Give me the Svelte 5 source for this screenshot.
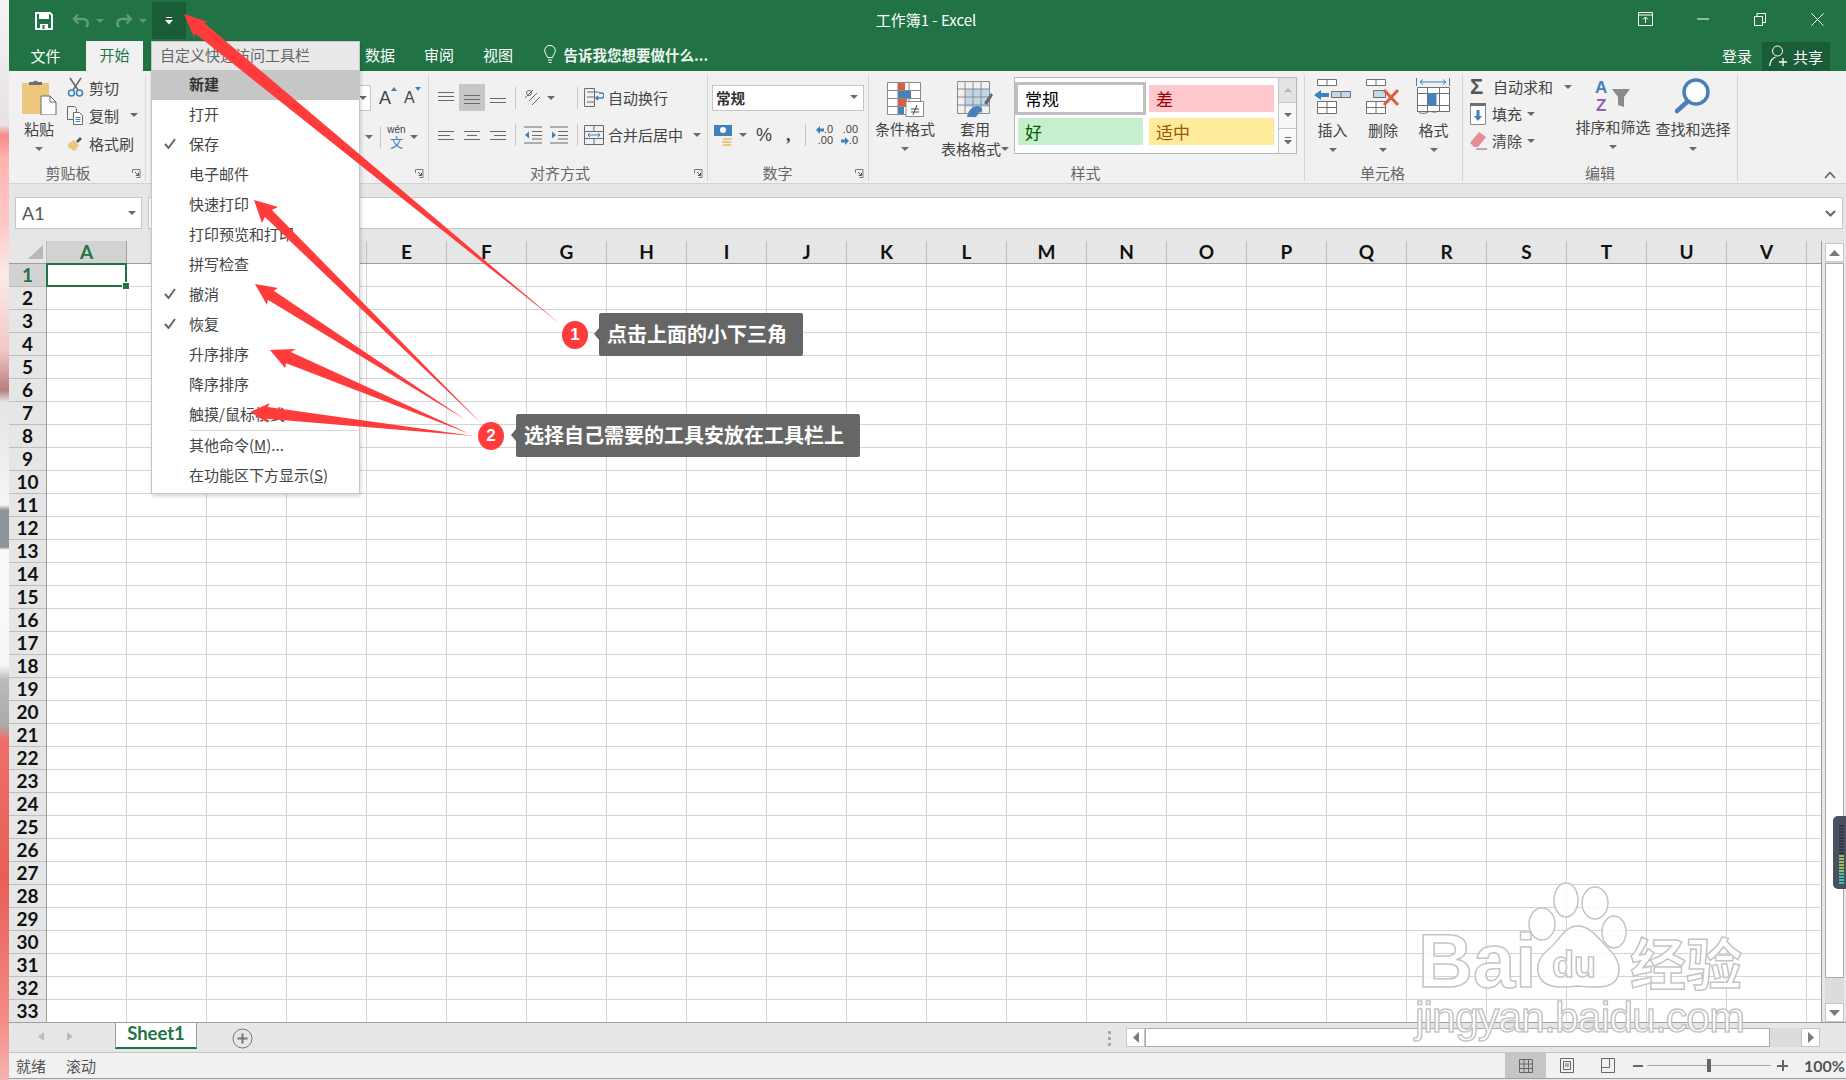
<script>
	const columns = "ABCDEFGHIJKLMNOPQRSTUV".split("");
	const rows = Array.from({ length: 33 }, (_, i) => i + 1);

	const menuItems = [
		{ label: "新建", active: true },
		{ label: "打开" },
		{ label: "保存", checked: true },
		{ label: "电子邮件" },
		{ label: "快速打印" },
		{ label: "打印预览和打印" },
		{ label: "拼写检查" },
		{ label: "撤消", checked: true },
		{ label: "恢复", checked: true },
		{ label: "升序排序" },
		{ label: "降序排序" },
		{ label: "触摸/鼠标模式" }
	];

	const arrows = [
		{ tip: [184, 14], a: [208, 22], b: [194, 37], tail: [560, 324], hw: 7 },
		{ tip: [254, 200], a: [278, 207], b: [262, 223], tail: [482, 424], hw: 5 },
		{ tip: [255, 284], a: [278, 288], b: [267, 305], tail: [466, 420], hw: 5.5 },
		{ tip: [270, 350], a: [296, 349], b: [285, 368], tail: [470, 434], hw: 6 },
		{ tip: [250, 412], a: [270, 403], b: [268, 423], tail: [474, 436], hw: 6 }
	];

	// tapered shaft from the tail up to the barbs
	function arrowPoints(r) {
		const mx = (r.a[0] + r.b[0]) / 2;
		const my = (r.a[1] + r.b[1]) / 2;
		const nx = mx + (r.tip[0] - mx) * 0.1;
		const ny = my + (r.tip[1] - my) * 0.1;
		const dx = r.tail[0] - r.tip[0];
		const dy = r.tail[1] - r.tip[1];
		const len = Math.hypot(dx, dy);
		let px = -dy / len;
		let py = dx / len;
		// make the perpendicular point at barb a
		if ((r.a[0] - mx) * px + (r.a[1] - my) * py < 0) {
			px = -px;
			py = -py;
		}
		const pts = [
			r.tail,
			[nx + px * r.hw, ny + py * r.hw],
			r.a,
			r.tip,
			r.b,
			[nx - px * r.hw, ny - py * r.hw]
		];
		return pts.map((p) => p.join(",")).join(" ");
	}
</script>

{#snippet caret(color = "#6a6a6a")}
	<svg class="caret" width="8" height="4" viewBox="0 0 8 4"><path d="M0 0h8L4 4z" fill={color} /></svg>
{/snippet}

{#snippet launcher()}
	<svg class="launcher" width="9" height="9" viewBox="0 0 9 9" fill="none" stroke="#7a7a7a">
		<path d="M.5 4V.5H8v8H4.5" />
		<path d="M3 3l3.5 3.5M6.5 3.8v2.7H3.8" stroke="#5a5a5a" />
	</svg>
{/snippet}

{#snippet aligned(widths, offsets, y = 0)}
	<svg width="18" height="16" viewBox="0 0 18 16" stroke="#6b6b6b">
		{#each widths as w, i}
			<path d={`M${offsets[i]} ${y + i * 4 + 2.5}h${w}`} />
		{/each}
	</svg>
{/snippet}

<div class="screen">
	<div class="desktop"></div>

	<div class="window">
		<header class="titlebar">
			<div class="qat">
				<svg class="save" width="18" height="18" viewBox="0 0 18 18">
					<path d="M1 1h14l2 2v14H1z" fill="none" stroke="#fff" stroke-width="2" />
					<path d="M4 1h10v6H4z" fill="#fff" />
					<path d="M5 12h8v5H5z" fill="#fff" />
					<path d="M7.5 13h2v4h-2z" fill="#217346" />
				</svg>
				<svg class="undo" width="18" height="16" viewBox="0 0 18 16" fill="none" stroke="#6ba283" stroke-width="2.4">
					<path d="M6 1.5L2 6l4.500 4.500M2.500 6H11a4.500 4.500 0 0 1 3 8" />
				</svg>
				<span class="dim-caret">{@render caret("#5f9a79")}</span>
				<svg class="redo" width="18" height="16" viewBox="0 0 18 16" fill="none" stroke="#6ba283" stroke-width="2.4">
					<path d="M12 1.500L16 6l-4.500 4.500M15.500 6H7a4.500 4.500 0 0 0-3 8" />
				</svg>
				<span class="dim-caret">{@render caret("#5f9a79")}</span>
				<div class="qat-more">
					<svg width="8" height="8" viewBox="0 0 8 8"><path d="M1 0h6v1H1zM0 3h8L4 7.500z" fill="#fff" /></svg>
				</div>
			</div>
			<div class="doc-title">工作簿1 - Excel</div>
			<div class="win-controls">
				<span class="win-btn">
					<svg width="15" height="14" viewBox="0 0 15 14" fill="none" stroke="#fff"><path d="M.5.5h14v13H.5zM.5 3h14M7.500 11V5M5 7.500l2.500-2.500L10 7.500" /></svg>
				</span>
				<span class="win-btn"><svg width="12" height="2" viewBox="0 0 12 2"><path d="M0 1h12" stroke="#fff" /></svg></span>
				<span class="win-btn">
					<svg width="12" height="13" viewBox="0 0 12 13" fill="none" stroke="#fff"><path d="M.5 3.500h8v9h-8zM3 3.500V.5h8.500v9H8.500" /></svg>
				</span>
				<span class="win-btn">
					<svg width="13" height="13" viewBox="0 0 13 13" stroke="#fff"><path d="M.5.5l12 12M12.500.5l-12 12" /></svg>
				</span>
			</div>
		</header>

		<nav class="tabs">
			<span class="tab file">文件</span>
			<span class="tab home">开始</span>
			<span class="tab-gap"></span>
			<span class="tab">数据</span>
			<span class="tab">审阅</span>
			<span class="tab">视图</span>
			<div class="tell-me">
				<svg width="12" height="19" viewBox="0 0 12 19" fill="none" stroke="#fff">
					<path d="M3.500 12.500C3 10 .7 8.500.7 5.700a5.300 5.300 0 0 1 10.600 0c0 2.800-2.300 4.300-2.800 6.800z" />
					<path d="M4 15h4M4.500 17.500h3" />
				</svg>
				<span>告诉我您想要做什么...</span>
			</div>
			<div class="account">
				<span class="login">登录</span>
				<div class="share">
					<svg width="19" height="22" viewBox="0 0 19 22" fill="none" stroke="#fff">
						<circle cx="8.500" cy="6" r="5" />
						<path d="M.7 21c.4-4.500 2.800-8 6-9M14 13v8M10 17h8" stroke-width="1.300" />
					</svg>
					<span>共享</span>
				</div>
			</div>
		</nav>

		<section class="ribbon">
			<div class="group clipboard">
				<div class="group-body">
					<div class="big-btn paste">
						<svg width="36" height="36" viewBox="0 0 36 36">
							<rect x="1" y="4" width="27" height="31" rx="1" fill="#eec77f" />
							<path d="M8 6V3h4a3 3 0 0 1 5 0h4v3z" fill="#6f6f6f" />
							<path d="M20 17h9l6 6v13H20z" fill="#fff" stroke="#6a6a6a" />
							<path d="M29 17v6h6" fill="none" stroke="#6a6a6a" />
						</svg>
						<span class="big-label">粘贴</span>
						{@render caret()}
					</div>
					<div class="small-col">
						<div class="small-row">
							<svg width="17" height="20" viewBox="0 0 17 20" fill="none">
								<path d="M3 1l8 12M14 1L6 13" stroke="#6a6a6a" stroke-width="1.600" />
								<circle cx="4.500" cy="16" r="3" stroke="#3f80bd" stroke-width="1.500" />
								<circle cx="12.500" cy="16" r="3" stroke="#3f80bd" stroke-width="1.500" />
							</svg>
							<span>剪切</span>
						</div>
						<div class="small-row">
							<svg width="17" height="19" viewBox="0 0 17 19" fill="#f1f1f1" stroke="#6a6a6a">
								<path d="M.5.5h7l2 2v11h-9z" />
								<path d="M6.500 6.500h6l3 3v9h-9z" fill="#fff" />
								<path d="M8.500 11.500h5M8.500 13.500h5M8.500 15.500h5" stroke="#3f80bd" />
							</svg>
							<span>复制</span>
							<span class="after-text">{@render caret()}</span>
						</div>
						<div class="small-row">
							<svg width="17" height="17" viewBox="0 0 17 17">
								<path d="M1 9l6-4 5 5-4 6-3-1-1-2-2 1z" fill="#eec77f" />
								<path d="M9 6l4-4 2 2-4 4z" fill="#5a5a5a" />
							</svg>
							<span>格式刷</span>
						</div>
					</div>
				</div>
				<div class="group-label">剪贴板{@render launcher()}</div>
			</div>

			<div class="group font">
				<div class="group-body stacked">
					<div class="tool-row">
						<div class="font-size-stub">{@render caret()}</div>
						<span class="grow-a">A<svg width="6" height="4" viewBox="0 0 6 4"><path d="M0 4l3-4 3 4z" fill="#3f80bd" /></svg></span>
						<span class="grow-a shrink">A<svg width="6" height="4" viewBox="0 0 6 4"><path d="M0 0l3 4 3-4z" fill="#3f80bd" /></svg></span>
					</div>
					<div class="tool-row lower">
						{@render caret()}
						<i class="vsep"></i>
						<span class="wen"><b>wén</b><em>文</em></span>
						{@render caret()}
					</div>
				</div>
				<div class="group-label">{@render launcher()}</div>
			</div>

			<div class="group align">
				<div class="group-body stacked">
					<div class="tool-row top-row">
						<span class="al-btn">{@render aligned([16, 16, 16], [1, 1, 1], 0)}</span>
						<span class="al-btn on">{@render aligned([16, 16, 16], [1, 1, 1], 3)}</span>
						<span class="al-btn">{@render aligned([16, 16, 16], [1, 1, 1], 6)}</span>
						<i class="vsep"></i>
						<span class="orient">
							<svg width="19" height="19" viewBox="0 0 19 19" fill="none" stroke="#6a6a6a">
								<path d="M2 10l8-8M6 13l8-8M9 17l8-8" />
								<circle cx="6" cy="5" r="2.500" />
							</svg>
							{@render caret()}
						</span>
						<i class="vsep"></i>
						<span class="wrap-cmd">
							<svg width="20" height="19" viewBox="0 0 20 19" fill="none" stroke="#6a6a6a">
								<path d="M.5.5h10v18H.5zM3 4h12M3 9h7M3 14h7" />
								<path d="M15 5h2.500a2.500 2.500 0 0 1 0 5H12m2-2l-2 2 2 2" stroke="#3f80bd" stroke-width="1.500" />
							</svg>
							<span>自动换行</span>
						</span>
					</div>
					<div class="tool-row bottom-row">
						<span class="al-btn">{@render aligned([16, 12, 16], [1, 1, 1], 2)}</span>
						<span class="al-btn">{@render aligned([16, 10, 16], [1, 4, 1], 2)}</span>
						<span class="al-btn">{@render aligned([16, 12, 16], [1, 5, 1], 2)}</span>
						<i class="vsep"></i>
						<span class="indent">
							<svg width="18" height="18" viewBox="0 0 18 18" fill="none">
								<path d="M0 1h18M8 5.500h10M8 9.500h10M8 13h10M0 17h18" stroke="#6a6a6a" />
								<path d="M1 9l4-3.500v7z" fill="#3f80bd" />
							</svg>
							<svg width="18" height="18" viewBox="0 0 18 18" fill="none">
								<path d="M0 1h18M8 5.500h10M8 9.500h10M8 13h10M0 17h18" stroke="#6a6a6a" />
								<path d="M6 9L2 5.500v7z" fill="#3f80bd" />
							</svg>
						</span>
						<i class="vsep"></i>
						<span class="wrap-cmd">
							<svg width="20" height="20" viewBox="0 0 20 20" fill="none" stroke="#6a6a6a">
								<path d="M.5.5h19v19H.5zM.5 6.500h19M.5 13.500h19M10 .5v6M10 13.500v6" />
								<path d="M4 10h12M6 8l-2 2 2 2M14 8l2 2-2 2" stroke="#3f80bd" />
							</svg>
							<span>合并后居中</span>
							<span class="after-text">{@render caret()}</span>
						</span>
					</div>
				</div>
				<div class="group-label">对齐方式{@render launcher()}</div>
			</div>

			<div class="group number">
				<div class="group-body stacked">
					<div class="num-select"><span>常规</span>{@render caret()}</div>
					<div class="tool-row num-tools">
						<svg width="20" height="22" viewBox="0 0 20 22">
							<path d="M0 1h18v11H0z" fill="#3f80bd" />
							<circle cx="9" cy="6" r="3" fill="#fff" />
							<path d="M9 14h9v2H9zM8 17h9v2H8zM9 20h8v2H9z" fill="#eec77f" />
						</svg>
						{@render caret()}
						<span class="percent">%</span>
						<span class="comma">,</span>
						<i class="vsep"></i>
						<span class="dec">
							<b><svg width="8" height="8" viewBox="0 0 8 8"><path d="M4 0v2.500h4v3H4V8L0 4z" fill="#3f80bd" /></svg>.0</b>
							<b>.00</b>
						</span>
						<span class="dec">
							<b>.00</b>
							<b><svg width="8" height="8" viewBox="0 0 8 8"><path d="M4 0v2.500H0v3h4V8l4-4z" fill="#3f80bd" /></svg>.0</b>
						</span>
					</div>
				</div>
				<div class="group-label">数字{@render launcher()}</div>
			</div>

			<div class="group styles">
				<div class="group-body">
					<div class="big-btn cond">
						<svg width="37" height="35" viewBox="0 0 37 35" fill="#fff" stroke="#8a8a8a">
							<path d="M.5.5h33v32H.5zM.5 8.500h33M.5 16.500h33M.5 24.500h33M11 .5v32M22 .5v32" />
							<path d="M11 1h7v7h-7z" fill="#d9603f" stroke="none" />
							<path d="M11 9h13v7H11z" fill="#4a80b8" stroke="none" />
							<path d="M11 17h9v7h-9z" fill="#d9603f" stroke="none" />
							<path d="M11 25h6v7h-6z" fill="#4a80b8" stroke="none" />
							<path d="M19 19.500h17.500v15H19z" />
							<path d="M24 27h8M24 30h8M30 23l-4 10" stroke="#444" />
						</svg>
						<span class="big-label">条件格式</span>
						{@render caret()}
					</div>
					<div class="big-btn table-fmt">
						<svg width="37" height="37" viewBox="0 0 37 37" fill="none" stroke="#8a8a8a">
							<path d="M8 8h24v18H8z" fill="#c2d6ea" stroke="none" />
							<path d="M.5.5h32v32H.5zM.5 8h32M.5 16h32M.5 24h32M8 .5v32M16 .5v32M24 .5v32" />
							<path d="M27 22l7-10 2 2-6 10z" fill="#6a6a6a" stroke="none" />
							<path d="M10 36c1-6 5-11 10-11 4 0 6 3 5 6-3-1-3 2-6 5z" fill="#4a80b8" stroke="none" />
						</svg>
						<span class="big-label">套用</span>
						<span class="big-label">表格格式<span class="after-text tight">{@render caret()}</span></span>
					</div>
					<div class="gallery">
						<div class="gallery-grid">
							<div class="style-cell normal">常规</div>
							<div class="style-cell bad">差</div>
							<div class="style-cell good">好</div>
							<div class="style-cell neutral">适中</div>
						</div>
						<div class="gallery-scroll">
							<span class="up"><svg width="8" height="4" viewBox="0 0 8 4"><path d="M0 4h8L4 0z" fill="#b8b8b8" /></svg></span>
							<span>{@render caret()}</span>
							<span><svg width="8" height="8" viewBox="0 0 8 8"><path d="M1 0h6v1H1zM0 3h8L4 7.500z" fill="#6a6a6a" /></svg></span>
						</div>
					</div>
				</div>
				<div class="group-label">样式</div>
			</div>

			<div class="group cells">
				<div class="group-body">
					<div class="big-btn cell-btn">
						<svg width="40" height="37" viewBox="0 0 40 37" fill="#fff" stroke="#6f6f6f">
							<path d="M4.500 1.500h19v6h-19zM14 1.500v6" />
							<path d="M1 17l7-5v3h8v4H8v3z" fill="#3f80bd" stroke="none" />
							<path d="M18.500 13.500h19v6h-19zM28 13.500v6" fill="#c5d8ec" />
							<path d="M4.500 23.500h19v12h-19zM4.500 29.500h19M14 23.500v12" />
						</svg>
						<span class="big-label">插入</span>
						{@render caret()}
					</div>
					<div class="big-btn cell-btn">
						<svg width="40" height="37" viewBox="0 0 40 37" fill="#fff" stroke="#6f6f6f">
							<path d="M3.500 1.500h19v6h-19zM13 1.500v6" />
							<path d="M10.500 12.500h12v7h-12z" fill="#c5d8ec" />
							<path d="M3.500 23.500h19v12h-19zM3.500 29.500h19M13 23.500v12" />
							<path d="M21 12l14 15M35 12L21 27" stroke="#d9603f" stroke-width="3" />
						</svg>
						<span class="big-label">删除</span>
						{@render caret()}
					</div>
					<div class="big-btn cell-btn">
						<svg width="38" height="37" viewBox="0 0 38 37" fill="#fff" stroke="#6f6f6f">
							<path d="M5 4h26M8 1.500L5 4l3 2.500M28 1.500L31 4l-3 2.500M1.500 0v8M34.500 0v8" stroke="#3f80bd" fill="none" />
							<path d="M2.500 9.500h32v24h-32zM2.500 15.500h32M2.500 27.500h32M12.500 9.500v24M24.500 9.500v24" />
							<path d="M12.500 15h9v13h-9z" fill="#4a80b8" stroke="none" />
							<path d="M3 33c1 3 8 3 10 1s6 2 10-1" fill="none" />
						</svg>
						<span class="big-label">格式</span>
						{@render caret()}
					</div>
				</div>
				<div class="group-label">单元格</div>
			</div>

			<div class="group edit">
				<div class="group-body">
					<div class="small-col edit-col">
						<div class="small-row">
							<span class="sigma">Σ</span>
							<span>自动求和</span>
							<span class="after-text">{@render caret()}</span>
						</div>
						<div class="small-row">
							<svg width="17" height="22" viewBox="0 0 17 22">
								<path d="M.5 2.500h15v19H.5z" fill="#fff" stroke="#8a8a8a" />
								<path d="M0 0h16v3H0z" fill="#6f6f6f" />
								<path d="M6.500 7h3v6H12l-4 5-4-5h2.500z" fill="#3f80bd" />
							</svg>
							<span>填充</span>
							<span class="after-text tight">{@render caret()}</span>
						</div>
						<div class="small-row">
							<svg width="17" height="19" viewBox="0 0 17 19">
								<path d="M0 12l9-11 7 5-8 10H4z" fill="#e98a97" />
								<path d="M6 18h11" stroke="#6a6a6a" />
							</svg>
							<span>清除</span>
							<span class="after-text tight">{@render caret()}</span>
						</div>
					</div>
					<div class="big-btn sort-btn">
						<svg class="sort-icon" width="36" height="34" viewBox="0 0 36 34" fill="none">
							<text x="0" y="15" class="az a">A</text>
							<text x="1" y="33" class="az z">Z</text>
							<path d="M17 11h18l-6 8v10l-6-2v-8z" fill="#8a8a8a" />
						</svg>
						<span class="big-label">排序和筛选</span>
						{@render caret()}
					</div>
					<div class="big-btn sort-btn">
						<svg width="36" height="36" viewBox="0 0 36 36" fill="none">
							<circle cx="21" cy="14" r="12" fill="#fff" stroke="#4a80b8" stroke-width="3.500" />
							<path d="M12 24L2 33" stroke="#4a80b8" stroke-width="4.500" stroke-linecap="round" />
						</svg>
						<span class="big-label">查找和选择</span>
						{@render caret()}
					</div>
				</div>
				<div class="group-label">编辑</div>
			</div>

			<div class="collapse">
				<svg width="12" height="8" viewBox="0 0 12 8" fill="none" stroke="#555" stroke-width="1.500"><path d="M1 7l5-5.500L11 7" /></svg>
			</div>
		</section>

		<div class="formula-bar">
			<div class="name-box"><span>A1</span>{@render caret()}</div>
			<div class="formula-input">
				<svg width="11" height="7" viewBox="0 0 11 7" fill="none" stroke="#666" stroke-width="2"><path d="M1 1l4.500 4.500L10 1" /></svg>
			</div>
		</div>

		<div class="sheet-area">
			<div class="sheet">
				<div class="col-heads">
					<div class="corner"><i></i></div>
					{#each columns as col}
						<div class="col-head" class:current={col === "A"}>{col}</div>
					{/each}
				</div>
				<div class="sheet-body">
					<div class="row-heads">
						{#each rows as row}
							<div class="row-head" class:current={row === 1}>{row}</div>
						{/each}
					</div>
					<div class="cells-area">
						<div class="selected-cell"></div>
					</div>
				</div>
			</div>
			<div class="v-scroll">
				<div class="sb-btn"><svg width="11" height="6" viewBox="0 0 11 6"><path d="M0 6h11L5.500 0z" fill="#7a7a7a" /></svg></div>
				<div class="v-thumb"></div>
				<div class="sb-btn"><svg width="11" height="6" viewBox="0 0 11 6"><path d="M0 0h11L5.500 6z" fill="#7a7a7a" /></svg></div>
			</div>
		</div>

		<div class="sheet-tabs">
			<div class="tab-nav">
				<svg width="6" height="9" viewBox="0 0 6 9"><path d="M6 0v9L0 4.500z" fill="#bcbcbc" /></svg>
				<svg width="6" height="9" viewBox="0 0 6 9"><path d="M0 0v9l6-4.500z" fill="#bcbcbc" /></svg>
			</div>
			<div class="sheet-tab">Sheet1</div>
			<svg class="add-sheet" width="21" height="21" viewBox="0 0 21 21" fill="none" stroke="#777">
				<circle cx="10.500" cy="10.500" r="9.500" />
				<path d="M10.500 5.500v10M5.500 10.500h10" stroke-width="2" />
			</svg>
			<div class="tab-split"><i></i><i></i><i></i></div>
			<div class="h-scroll">
				<div class="sb-btn"><svg width="6" height="11" viewBox="0 0 6 11"><path d="M6 0v11L0 5.500z" fill="#7a7a7a" /></svg></div>
				<div class="h-thumb"></div>
				<div class="h-track"></div>
				<div class="sb-btn"><svg width="6" height="11" viewBox="0 0 6 11"><path d="M0 0v11l6-5.500z" fill="#7a7a7a" /></svg></div>
			</div>
		</div>

		<footer class="status">
			<span class="st-text">就绪</span>
			<span class="st-text">滚动</span>
			<div class="st-right">
				<span class="view on">
					<svg width="14" height="14" viewBox="0 0 14 14" fill="none" stroke="#666"><path d="M.5.5h13v13H.5zM.5 5h13M.5 9.500h13M5 .5v13M9.500 .5v13" /></svg>
				</span>
				<span class="view">
					<svg width="14" height="15" viewBox="0 0 14 15" fill="none" stroke="#666"><path d="M.5.5h13v14H.5zM3.500 3.500h7v8h-7zM5 6h4M5 8h4" /></svg>
				</span>
				<span class="view">
					<svg width="14" height="15" viewBox="0 0 14 15" fill="none" stroke="#666"><path d="M.5.5h13v14H.5zM.5 9.500h8v-9" /></svg>
				</span>
				<span class="zoom-sign minus"></span>
				<div class="slider"><i></i></div>
				<span class="zoom-sign plus"></span>
				<span class="zoom-val">100%</span>
			</div>
		</footer>
	</div>

	<div class="qat-menu">
		<div class="menu-head">自定义快速访问工具栏</div>
		{#each menuItems as item}
			<div class="menu-item" class:active={item.active}>
				<span class="check">
					{#if item.checked}
						<svg width="12" height="11" viewBox="0 0 12 11" fill="none" stroke="#666" stroke-width="2"><path d="M1 6l3.500 4L11 1" /></svg>
					{/if}
				</span>
				{item.label}
			</div>
		{/each}
		<div class="menu-sep"></div>
		<div class="menu-item"><span class="check"></span>其他命令(<u>M</u>)...</div>
		<div class="menu-item"><span class="check"></span>在功能区下方显示(<u>S</u>)</div>
	</div>

	<svg class="watermark" width="340" height="170" viewBox="1410 875 340 170">
		<g class="wm-shape">
			<ellipse cx="1566" cy="900" rx="12" ry="17" />
			<ellipse cx="1595" cy="903" rx="13" ry="16" />
			<ellipse cx="1542" cy="924" rx="13" ry="16" />
			<ellipse cx="1614" cy="932" rx="12" ry="16" />
			<path d="M1578 926c12 0 20 12 30 22 12 12 14 22 8 32-6 8-18 8-38 6-18 2-32 2-38-8-6-12 0-22 10-30 10-8 14-22 28-22z" />
		</g>
		<text x="1418" y="987" class="wm-bai">Bai</text>
		<text x="1552" y="977" class="wm-du">du</text>
		<text x="1630" y="985" class="wm-cn">经验</text>
		<text x="1415" y="1032" class="wm-url" textLength="330">jingyan.baidu.com</text>
	</svg>

	<svg class="arrows" width="1846" height="1080" viewBox="0 0 1846 1080">
		{#each arrows as r}
			<polygon points={arrowPoints(r)} fill="#ff3b3b" />
		{/each}
	</svg>

	<div class="callout first">
		<span class="badge">1</span>
		<span class="tip">点击上面的小下三角</span>
	</div>
	<div class="callout second">
		<span class="badge">2</span>
		<span class="tip">选择自己需要的工具安放在工具栏上</span>
	</div>

	<div class="meter">
		{#each Array(20) as _, i}
			<i class:lit={i > 9} class:teal={i > 15}></i>
		{/each}
	</div>
</div>

<style>
	:global(body) {
		margin: 0;
		background: #fff;
	}

	.screen {
		position: relative;
		display: flex;
		width: 1846px;
		height: 1080px;
		overflow: hidden;
		font-family: "Noto Sans CJK SC", "Liberation Sans", sans-serif;
		font-size: 15px;
		color: #444;
	}

	svg {
		display: block;
		flex: none;
	}

	.desktop {
		flex: 0 0 9px;
		background: linear-gradient(
			to bottom,
			#f4f4f4 0,
			#e8e2e2 125px,
			#f88b85 135px,
			#ffb5b0 160px,
			#ffc9c5 225px,
			#f9eaea 275px,
			#f3c8c6 350px,
			#b77e7c 390px,
			#e5e5e5 402px,
			#f5f5f5 505px,
			#8e9599 510px,
			#8e9599 547px,
			#fafafa 550px,
			#f7f7f7 665px,
			#bbb 680px,
			#aaa 725px,
			#ef6f68 740px,
			#e85e58 880px,
			#f58c86 1020px,
			#f4b4b0 1080px
		);
	}

	.window {
		flex: 1;
		display: flex;
		flex-direction: column;
		min-width: 0;
		background: #e6e6e6;
	}

	.titlebar {
		display: grid;
		grid-template-columns: 1fr auto 1fr;
		align-items: start;
		height: 41px;
		background: #217346;
		color: #fff;
	}

	.qat {
		display: flex;
		align-items: center;
		height: 37px;
		margin-top: 2px;
		padding-left: 26px;
	}

	.undo {
		margin-left: 19px;
		opacity: 0.85;
	}

	.redo {
		margin-left: 11px;
		opacity: 0.85;
	}

	.dim-caret {
		margin-left: 6px;
	}

	.qat-more {
		display: flex;
		align-items: center;
		justify-content: center;
		width: 34px;
		height: 37px;
		margin-left: 5px;
		background: #1a5c38;
	}

	.doc-title {
		padding-top: 9px;
		padding-right: 3px;
		font-size: 15px;
		line-height: 22px;
		color: #fff;
	}

	.win-controls {
		display: flex;
		justify-content: flex-end;
	}

	.win-btn {
		display: flex;
		align-items: center;
		justify-content: center;
		width: 57.300px;
		height: 38px;
	}

	.tabs {
		display: flex;
		align-items: stretch;
		height: 30px;
		background: #217346;
		color: #fff;
	}

	.tab {
		display: flex;
		align-items: center;
		justify-content: center;
		width: 59px;
		line-height: 1;
		padding-bottom: 3px;
		box-sizing: border-box;
	}

	/* these tabs sit behind the open menu */
	.tab-gap {
		flex: 0 0 207.500px;
	}

	.tab.file {
		width: 77px;
		padding-right: 4px;
		padding-bottom: 1px;
	}

	.tab.home {
		width: 57px;
		background: #f1f1f1;
		color: #217346;
	}

	.tell-me {
		display: flex;
		align-items: center;
		gap: 8px;
		margin-left: 16px;
		padding-bottom: 3px;
		font-size: 14.500px;
		font-weight: 700;
		color: #eef5f0;
	}

	.account {
		display: flex;
		align-items: center;
		margin-left: auto;
		padding-right: 16px;
	}

	.login {
		margin-right: 10px;
		padding-bottom: 2px;
	}

	.share {
		display: flex;
		align-items: center;
		gap: 5px;
		height: 29px;
		width: 68px;
		box-sizing: border-box;
		padding-left: 7px;
		background: #1a5c38;
	}

	.ribbon {
		display: flex;
		height: 113px;
		padding-top: 4px;
		box-sizing: border-box;
		background: #f1f1f1;
		border-bottom: 1px solid #d2d2d2;
	}

	.group {
		display: flex;
		flex-direction: column;
		flex: none;
		height: 106px;
		box-sizing: border-box;
		border-right: 1px solid #d4d4d4;
	}

	.group-body {
		display: flex;
		height: 90px;
	}

	.group-body.stacked {
		flex-direction: column;
	}

	.group-label {
		display: flex;
		align-items: center;
		justify-content: center;
		position: relative;
		box-sizing: border-box;
		height: 16px;
		font-size: 15px;
		line-height: 16px;
		color: #666;
	}

	.clipboard .group-label {
		padding-right: 18px;
	}

	.align .group-label {
		padding-right: 16px;
	}

	.number .group-label {
		padding-right: 21px;
	}

	.styles .group-label,
	.cells .group-label {
		padding-right: 2px;
	}

	.launcher {
		position: absolute;
		right: 4px;
		top: 4px;
	}

	.caret {
		flex: none;
	}

	.big-btn {
		display: flex;
		flex-direction: column;
		align-items: center;
		flex: none;
	}

	.big-label {
		display: flex;
		align-items: center;
		line-height: 20px;
		white-space: nowrap;
	}

	.big-btn > .caret {
		margin-top: 8px;
	}

	.after-text {
		margin-left: 6px;
	}

	.after-text.tight {
		margin-left: 0;
	}

	.clipboard {
		width: 137px;
	}

	.paste {
		width: 36px;
		margin: 4px 0 0 12px;
	}

	.paste .big-label {
		margin-top: 4px;
	}

	.small-col {
		display: flex;
		flex-direction: column;
		margin-left: 10px;
		margin-top: -2px;
	}

	.small-row {
		display: flex;
		align-items: center;
		gap: 5px;
		height: 28px;
		white-space: nowrap;
	}

	.font {
		width: 283px;
	}

	.tool-row {
		display: flex;
		align-items: center;
		white-space: nowrap;
	}

	.font .tool-row {
		padding-left: 214px;
	}

	.font .group-label {
		justify-content: flex-end;
	}

	.font-size-stub {
		display: flex;
		align-items: center;
		justify-content: flex-end;
		width: 11px;
		height: 26px;
		padding-right: 3px;
		margin-top: 10px;
		box-sizing: border-box;
		background: #fff;
		border: 1px solid #c6c6c6;
		border-left: 0;
	}

	.grow-a {
		display: flex;
		align-items: flex-start;
		margin: 10px 0 0 8px;
		width: 17px;
		font: 18px/22px "Liberation Sans", sans-serif;
	}

	.grow-a.shrink {
		margin-left: 8px;
		font-size: 16px;
	}

	.tool-row.lower {
		margin-top: 14px;
		gap: 0;
		padding-left: 219px;
	}

	.vsep {
		display: block;
		flex: none;
		width: 1px;
		height: 22px;
		background: #c6c6c6;
	}

	.lower .vsep {
		margin: 0 7px;
	}

	.wen {
		display: flex;
		flex-direction: column;
		align-items: center;
		width: 17px;
		margin-right: 5px;
		line-height: 11px;
	}

	.wen b {
		font: 10px/10px "Liberation Sans", sans-serif;
	}

	.wen em {
		font-style: normal;
		font-size: 13px;
		line-height: 13px;
		color: #3f80bd;
	}

	.align {
		width: 279px;
	}

	.top-row {
		height: 27px;
		margin-top: 9px;
		padding-left: 4px;
	}

	.bottom-row {
		height: 27px;
		margin-top: 10px;
		padding-left: 4px;
	}

	.al-btn {
		display: flex;
		align-items: center;
		justify-content: center;
		width: 26px;
		height: 27px;
	}

	.al-btn.on {
		background: #c6c6c6;
	}

	.align .vsep {
		margin: 0 0 0 4px;
	}

	.orient {
		display: flex;
		align-items: center;
		gap: 5px;
		width: 57px;
		padding-left: 7px;
		box-sizing: border-box;
	}

	.indent {
		display: flex;
		gap: 8px;
		width: 57px;
		box-sizing: border-box;
		padding-left: 8px;
	}

	.wrap-cmd {
		display: flex;
		align-items: center;
		gap: 4px;
		margin-left: 6px;
	}

	.number {
		width: 161px;
	}

	.num-select {
		display: flex;
		align-items: center;
		justify-content: space-between;
		width: 152px;
		height: 26px;
		box-sizing: border-box;
		margin: 10px 0 0 4px;
		padding: 0 5px 2px 3px;
		background: #fff;
		border: 1px solid #c6c6c6;
		font-weight: 700;
		font-size: 14.500px;
		color: #333;
	}

	.num-tools {
		margin: 13px 0 0 6px;
	}

	.num-tools .caret {
		margin-left: 5px;
	}

	.percent {
		margin-left: 9px;
		font: 18px/22px "Liberation Sans", sans-serif;
	}

	.comma {
		margin-left: 14px;
		width: 13px;
		font: 700 18px/14px "Liberation Serif", serif;
	}

	.num-tools .vsep {
		margin: 0 3px 0 6px;
	}

	.dec {
		display: flex;
		flex-direction: column;
		align-items: flex-end;
		width: 24px;
		margin-right: 1px;
	}

	.dec b {
		display: flex;
		align-items: center;
		font: 11px/11px "Liberation Sans", sans-serif;
	}

	.styles {
		width: 436px;
	}

	.styles .group-body {
		padding-left: 6px;
	}

	.cond {
		width: 60px;
		padding-top: 7px;
		box-sizing: border-box;
	}

	.cond .big-label {
		margin-top: 2px;
	}

	.table-fmt {
		width: 78px;
		padding-top: 6px;
		box-sizing: border-box;
		margin-left: 1px;
	}

	.table-fmt .big-label:first-of-type {
		margin-top: 1px;
	}

	.gallery {
		display: flex;
		height: 77px;
		width: 283px;
		margin: 2px 0 0 0;
		box-sizing: border-box;
		background: #fff;
		border: 1px solid #b8b8b8;
	}

	.gallery-grid {
		display: grid;
		grid-template-columns: 125px 125px;
		grid-template-rows: 27px 27px;
		gap: 6px;
		flex: 1;
		padding: 7px 0 0 3px;
	}

	.style-cell {
		display: flex;
		align-items: center;
		padding-left: 7px;
		font-size: 17px;
	}

	.normal {
		background: #fff;
		color: #000;
		box-shadow: 0 0 0 3px #bfbfbf;
	}

	.bad {
		background: #ffc7ce;
		color: #9c0006;
	}

	.good {
		background: #c6efce;
		color: #006100;
	}

	.neutral {
		background: #ffeb9c;
		color: #9c5700;
	}

	.gallery-scroll {
		display: flex;
		flex-direction: column;
		flex: 0 0 17px;
		border-left: 1px solid #c6c6c6;
		background: #f8f8f8;
	}

	.gallery-scroll span {
		display: flex;
		align-items: center;
		justify-content: center;
		flex: 1;
		border-bottom: 1px solid #c6c6c6;
	}

	.gallery-scroll span:last-child {
		border-bottom: 0;
	}

	.gallery-scroll .up {
		background: #e3e3e3;
	}

	.cells {
		width: 158px;
	}

	.cells .group-body {
		padding-left: 3px;
	}

	.cell-btn {
		width: 49px;
		padding-top: 3px;
	}

	.cell-btn:nth-child(2) {
		width: 52px;
	}

	.cell-btn .big-label {
		margin-top: 5px;
	}

	.edit {
		width: 275px;
	}

	.edit-col {
		margin-left: 7px;
		width: 103px;
		flex: none;
	}

	.sigma {
		width: 18px;
		font: 700 22px/22px "Liberation Sans", sans-serif;
		color: #555;
	}

	.edit .small-row {
		height: 27px;
		gap: 5px;
	}

	.sort-btn {
		width: 80px;
		padding-top: 3px;
	}

	.sort-btn .big-label {
		margin-top: 5px;
	}

	.sort-icon .az {
		font: 700 17px "Liberation Sans", sans-serif;
	}

	.sort-icon .a {
		fill: #4a80b8;
	}

	.sort-icon .z {
		fill: #8f5fb4;
	}

	.collapse {
		display: flex;
		flex: 1;
		align-items: flex-end;
		justify-content: flex-end;
		padding: 0 10px 4px 0;
	}

	.formula-bar {
		display: flex;
		height: 32px;
		margin-top: 13px;
		padding-right: 3px;
	}

	.name-box {
		display: flex;
		align-items: center;
		justify-content: space-between;
		width: 127px;
		margin-left: 6px;
		padding: 0 5px 0 6px;
		box-sizing: border-box;
		background: #fff;
		border: 1px solid #c6c6c6;
		font: 18px "Lato", sans-serif;
		color: #555;
	}

	.formula-input {
		display: flex;
		align-items: center;
		justify-content: flex-end;
		flex: 1;
		margin-left: 6px;
		padding-right: 6px;
		background: #fff;
		border: 1px solid #c6c6c6;
	}

	.sheet-area {
		display: flex;
		flex: 1;
		min-height: 0;
		margin-top: 12px;
	}

	.sheet {
		display: flex;
		flex-direction: column;
		width: 1813px;
		border-right: 1px solid #9e9e9e;
		box-sizing: border-box;
	}

	.col-heads {
		display: flex;
		height: 22px;
		background: #e6e6e6;
		border-bottom: 1px solid #9e9e9e;
	}

	.corner {
		display: flex;
		align-items: flex-end;
		justify-content: flex-end;
		flex: none;
		border-right: 1px solid #bdbdbd;
		padding: 0 3px 4px 0;
		box-sizing: border-box;
		width: 38px;
	}

	.corner i {
		width: 0;
		height: 0;
		border-left: 15px solid transparent;
		border-bottom: 14px solid #b8b8b8;
	}

	.col-head {
		display: flex;
		align-items: center;
		justify-content: center;
		flex: 0 0 80px;
		box-sizing: border-box;
		border-right: 1px solid #bdbdbd;
		font: 700 19px/22px "Lato", sans-serif;
		color: #111;
	}

	.col-head.current {
		background: #d2d2d2;
		color: #217346;
		border-right-color: #9e9e9e;
	}

	.sheet-body {
		display: flex;
		flex: 1;
		min-height: 0;
	}

	.row-heads {
		flex: 0 0 38px;
		border-right: 1px solid #9e9e9e;
		box-sizing: border-box;
		background: #e6e6e6;
	}

	.row-head {
		height: 23px;
		box-sizing: border-box;
		border-bottom: 1px solid #bdbdbd;
		text-align: center;
		font: 700 19px/22px "Lato", sans-serif;
		color: #111;
	}

	.row-head.current {
		background: #d2d2d2;
		color: #217346;
	}

	.cells-area {
		position: relative;
		flex: 1;
		background-color: #fff;
		background-image:
			repeating-linear-gradient(to right, transparent 0 79px, #d4d4d4 79px 80px),
			repeating-linear-gradient(to bottom, transparent 0 22px, #d4d4d4 22px 23px);
	}

	.selected-cell {
		position: absolute;
		left: -1px;
		top: -1px;
		width: 81px;
		height: 24px;
		box-sizing: border-box;
		border: 2px solid #217346;
	}

	.selected-cell::after {
		content: "";
		position: absolute;
		right: -4px;
		bottom: -4px;
		width: 6px;
		height: 6px;
		background: #217346;
		box-shadow: 0 0 0 1px #fff;
	}

	.v-scroll {
		display: flex;
		flex-direction: column;
		width: 19px;
		margin: 2px 0 0 3px;
		background: #dcdcdc;
	}

	.sb-btn {
		display: flex;
		align-items: center;
		justify-content: center;
		flex: none;
		box-sizing: border-box;
		width: 19px;
		height: 19px;
		background: #fff;
		border: 1px solid #c6c6c6;
	}

	.v-thumb {
		height: 716px;
		margin: 1px 0 25px;
		box-sizing: border-box;
		background: #fff;
		border: 1px solid #ababab;
	}

	.sheet-tabs {
		display: flex;
		align-items: flex-start;
		height: 30px;
		box-sizing: border-box;
		background: #e6e6e6;
		border-top: 1px solid #9e9e9e;
	}

	.tab-nav {
		display: flex;
		align-items: center;
		gap: 23px;
		width: 106px;
		height: 27px;
		box-sizing: border-box;
		padding-left: 29px;
	}

	.sheet-tab {
		width: 82px;
		height: 26px;
		box-sizing: border-box;
		background: #fff;
		border: 1px solid #9e9e9e;
		border-top: 0;
		border-bottom: 2px solid #217346;
		text-align: center;
		font: 700 18.500px/21px "Lato", sans-serif;
		color: #217346;
	}

	.add-sheet {
		margin: 5px 0 0 35px;
	}

	.tab-split {
		display: flex;
		flex-direction: column;
		gap: 3px;
		margin: 8px 0 0 855px;
	}

	.tab-split i {
		display: block;
		width: 3px;
		height: 3px;
		background: #a8a8a8;
	}

	.h-scroll {
		display: flex;
		align-items: stretch;
		height: 19px;
		margin: 5px 0 0 15px;
	}

	.h-thumb {
		width: 625px;
		box-sizing: border-box;
		background: #fff;
		border: 1px solid #ababab;
	}

	.h-track {
		width: 31px;
		background: #dcdcdc;
	}

	.status {
		display: flex;
		align-items: center;
		height: 27px;
		box-sizing: border-box;
		margin-bottom: 1px;
		padding-left: 7px;
		background: #f1f1f1;
		border-top: 1px solid #c6c6c6;
		border-bottom: 1px solid #9e9e9e;
		color: #555;
	}

	.st-text {
		margin-right: 20px;
	}

	.st-right {
		display: flex;
		align-items: center;
		align-self: stretch;
		margin-left: auto;
	}

	.view {
		display: flex;
		align-items: center;
		justify-content: center;
		width: 41px;
		height: 100%;
	}

	.view.on {
		background: #c6c6c6;
	}

	.zoom-sign {
		position: relative;
		display: block;
		width: 10px;
		height: 2px;
		background: #666;
		margin-left: 5px;
	}

	.zoom-sign.plus {
		width: 11px;
		margin-left: 6px;
	}

	.zoom-sign.plus::after {
		content: "";
		position: absolute;
		left: 4.500px;
		top: -4.500px;
		width: 2px;
		height: 11px;
		background: #666;
	}

	.slider {
		position: relative;
		width: 124px;
		height: 1px;
		margin-left: 4px;
		background: #a8a8a8;
	}

	.slider i {
		position: absolute;
		left: 60px;
		top: -6px;
		width: 4px;
		height: 13px;
		background: #666;
	}

	.zoom-val {
		width: 42px;
		margin-left: 16px;
		font: 700 16px "Lato", sans-serif;
		color: #555;
		white-space: nowrap;
	}

	/* dropdown opened from the quick access toolbar */
	.qat-menu {
		position: absolute;
		left: 151px;
		top: 41px;
		width: 209px;
		height: 453px;
		box-sizing: border-box;
		background: #fff;
		border: 1px solid #c6c6c6;
		box-shadow: 1px 2px 4px rgba(0, 0, 0, 0.18);
	}

	.menu-head {
		height: 28px;
		padding-left: 8px;
		background: #e9e9e9;
		font-size: 15px;
		line-height: 26px;
		color: #666;
	}

	.menu-item {
		display: flex;
		align-items: center;
		height: 30px;
		box-sizing: border-box;
		padding-bottom: 3px;
		font-size: 15px;
		color: #444;
		white-space: nowrap;
	}

	.menu-item.active {
		background: #c6c6c6;
		font-weight: 700;
		color: #333;
	}

	.check {
		display: flex;
		justify-content: center;
		flex: 0 0 37px;
		padding: 0 2px 0 0;
		box-sizing: border-box;
	}

	.menu-sep {
		height: 1px;
		margin: 0 0 0 38px;
		background: #d8d8d8;
	}

	.arrows {
		position: absolute;
		left: 0;
		top: 0;
		pointer-events: none;
	}

	.callout {
		position: absolute;
		display: flex;
		align-items: center;
	}

	.callout.first {
		left: 562px;
		top: 313px;
	}

	.callout.second {
		left: 478px;
		top: 414px;
	}

	.badge {
		flex: 0 0 26px;
		height: 28px;
		border-radius: 50%;
		background: #ff3b3b;
		text-align: center;
		font: 700 17px/28px "Liberation Sans", sans-serif;
		color: #fff;
	}

	.tip {
		position: relative;
		margin-left: 11px;
		padding: 0 16px 0 8px;
		height: 43px;
		border-radius: 2px;
		background: #666;
		font-size: 20px;
		font-weight: 700;
		line-height: 41px;
		color: #fff;
		white-space: nowrap;
	}

	.second .tip {
		margin-left: 12px;
	}

	.tip::before {
		content: "";
		position: absolute;
		left: -5px;
		top: 15px;
		border-top: 6px solid transparent;
		border-bottom: 6px solid transparent;
		border-right: 5px solid #666;
	}

	.watermark {
		position: absolute;
		left: 1410px;
		top: 875px;
		filter: blur(0.7px);
		pointer-events: none;
	}

	.wm-shape,
	.wm-bai,
	.wm-du,
	.wm-cn,
	.wm-url {
		fill: rgba(255, 255, 255, 0.85);
		stroke: #c4c4c4;
		stroke-width: 1.500px;
	}

	.wm-bai {
		font: 700 76px "Liberation Sans", sans-serif;
	}

	.wm-du {
		font: 700 36px "Liberation Sans", sans-serif;
	}

	.wm-cn {
		font: 700 56px "Noto Sans CJK SC", sans-serif;
	}

	.wm-url {
		font: 400 43px "Liberation Sans", sans-serif;
	}

	.meter {
		position: absolute;
		right: 0;
		top: 816px;
		display: flex;
		flex-direction: column;
		align-items: flex-end;
		gap: 1px;
		width: 13px;
		height: 73px;
		box-sizing: border-box;
		padding: 9px 2px 0 0;
		background: #4a5060;
		border-radius: 5px 0 0 5px;
	}

	.meter i {
		display: block;
		width: 5px;
		height: 2px;
		background: #343947;
	}

	.meter i.lit {
		background: #8fc25a;
	}

	.meter i.teal {
		background: #3fbfa4;
	}
</style>
